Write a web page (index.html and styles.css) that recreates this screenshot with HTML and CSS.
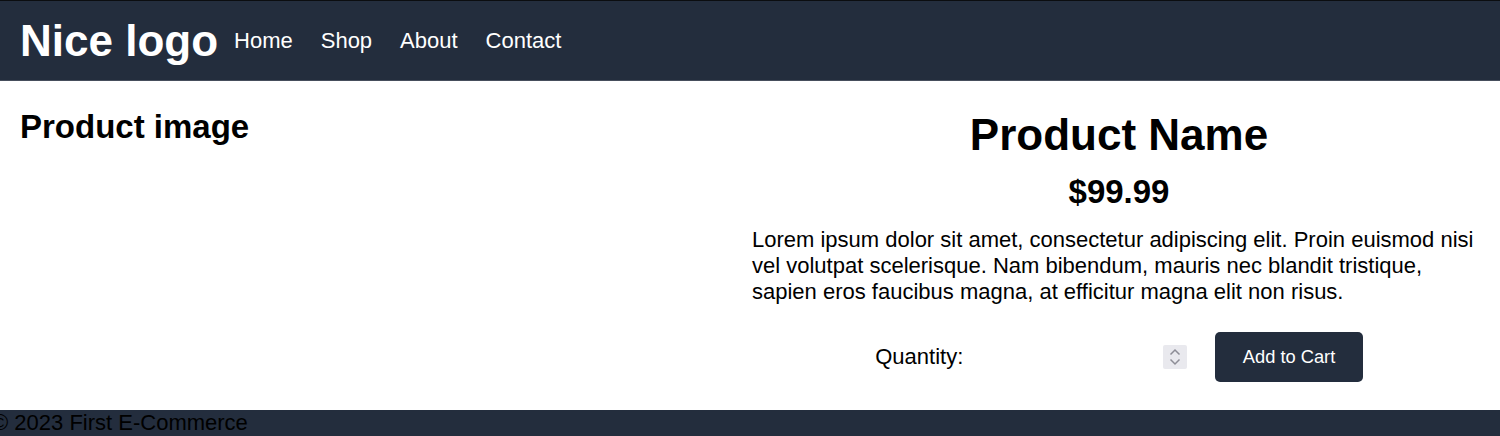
FILE: index.html
```html
<!DOCTYPE html>
<html lang="en">
<head>
    <meta charset="UTF-8">
    <meta name="viewport" content="width=device-width, initial-scale=1.0">
    <title>First E-Commerce</title>
    <link rel="stylesheet" href="styles.css">
</head>
<body>
    <header class="site-header">
        <h1 class="logo">Nice logo</h1>
        <nav class="nav">
            <a href="#">Home</a>
            <a href="#">Shop</a>
            <a href="#">About</a>
            <a href="#">Contact</a>
        </nav>
    </header>

    <main class="product">
        <div class="product-image">
            <h2>Product image</h2>
        </div>
        <div class="product-info">
            <h1 class="product-name">Product Name</h1>
            <h2 class="product-price">$99.99</h2>
            <p class="product-desc">Lorem ipsum dolor sit amet, consectetur adipiscing elit. Proin euismod nisi vel volutpat scelerisque. Nam bibendum, mauris nec blandit tristique, sapien eros faucibus magna, at efficitur magna elit non risus.</p>
            <div class="buy-row">
                <label for="quantity">Quantity:</label>
                <div class="qty-input">
                    <input type="number" id="quantity" min="1">
                    <span class="spinner">
                        <svg width="14" height="20" viewBox="0 0 14 20">
                            <path d="M2.5 7.5 L7 3 L11.5 7.5" fill="none" stroke="#8d8d96" stroke-width="1.5"/>
                            <path d="M2.5 12.5 L7 17 L11.5 12.5" fill="none" stroke="#8d8d96" stroke-width="1.5"/>
                        </svg>
                    </span>
                </div>
                <button class="add-btn">Add to Cart</button>
            </div>
        </div>
    </main>

    <footer class="site-footer">
        <p>&copy; 2023 First E-Commerce</p>
    </footer>
</body>
</html>
```

FILE: styles.css
```css
body {
    margin: 0;
    font-family: 'Liberation Sans', Arial, sans-serif;
    font-size: 22px;
    color: #000;
    background: #fff;
}

/* Cabeçalho */
.site-header {
    display: flex;
    align-items: center;
    height: 79px;
    padding: 0 20px;
    background: #232d3d;
    border-top: 1px solid #0b0d10;
    border-bottom: 1px solid #464e5c;
}

.logo {
    margin: 0;
    font-size: 44px;
    font-weight: bold;
    color: #fff;
}

.nav {
    display: flex;
    gap: 28px;
    margin-left: 16px;
}

.nav a {
    color: #fff;
    text-decoration: none;
    font-size: 22px;
}

/* Produto */
.product {
    display: flex;
}

.product-image {
    width: 712px;
    padding-left: 20px;
}

.product-image h2 {
    margin: 27px 0 0;
    font-size: 33px;
}

.product-info {
    flex: 1;
    padding: 0 14px 0 20px;
    text-align: center;
}

.product-name {
    margin: 29px 0 13px;
    font-size: 44px;
}

.product-price {
    margin: 0 0 16px;
    font-size: 33px;
}

.product-desc {
    margin: 0;
    text-align: left;
}

.buy-row {
    display: flex;
    justify-content: center;
    align-items: center;
    margin: 27px 0 28px;
}

.qty-input {
    display: flex;
    align-items: center;
    width: 210px;
    margin-left: 14px;
}

.qty-input input {
    flex: 1;
    min-width: 0;
    border: none;
    outline: none;
    background: transparent;
    font: inherit;
    -moz-appearance: textfield;
}

.qty-input input::-webkit-inner-spin-button,
.qty-input input::-webkit-outer-spin-button {
    -webkit-appearance: none;
    margin: 0;
}

.spinner {
    display: flex;
    align-items: center;
    justify-content: center;
    width: 24px;
    height: 24px;
    background: #e9e9ee;
    border-radius: 2px;
}

.add-btn {
    margin-left: 28px;
    padding: 13.75px 27.5px;
    border: none;
    border-radius: 5px;
    background: #232d3d;
    color: #fff;
    font-family: 'Liberation Sans', Arial, sans-serif;
    font-size: 18.3px;
}

/* Rodapé */
.site-footer {
    background: #232d3d;
    height: 40px;
}

.site-footer p {
    margin: 0 0 0 -8px;
    color: #000;
}
```
